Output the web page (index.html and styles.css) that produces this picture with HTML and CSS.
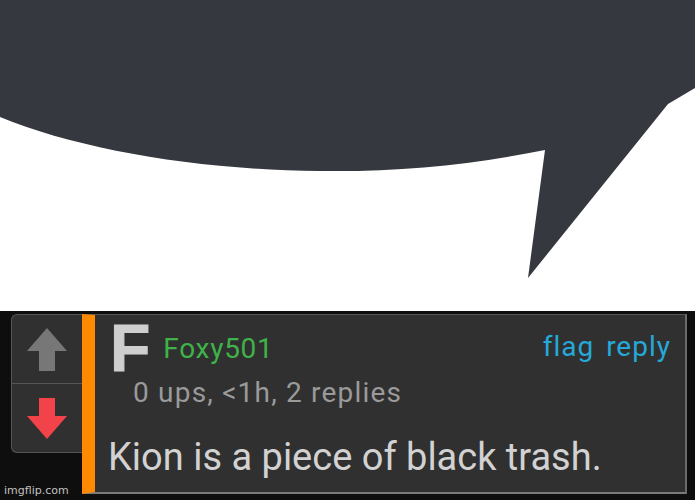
FILE: index.html
```html
<!DOCTYPE html>
<html lang="en">
<head>
  <meta charset="UTF-8" />
  <meta name="viewport" content="width=device-width, initial-scale=1.0" />
  <title>Comment</title>
  <link rel="stylesheet" href="styles.css">
</head>
<body>
  <div class="bubble">
    <svg width="695" height="311" viewBox="0 0 695 311">
      <path d="M0,0 H695 V88 L668,104 L528,278 L545,150 C470,165 400,172 320,171 C200,170 80,150 0,117 Z" fill="#363840" />
    </svg>
  </div>

  <section class="thread">
    <div class="votes">
      <div class="vote up">
        <svg width="40" height="43" viewBox="0 0 40 43"><polygon points="20,0 40,23 28,23 28,43 12,43 12,23 0,23" fill="#777" /></svg>
      </div>
      <div class="vote down">
        <svg width="40" height="41" viewBox="0 0 40 41"><polygon points="12,0 28,0 28,18 40,18 20,41 0,18 12,18" fill="#f2434b" /></svg>
      </div>
    </div>

    <div class="comment">
      <div class="comment-head">
        <span class="avatar">F</span>
        <span class="user">Foxy501</span>
        <span class="links"><a>flag</a><a>reply</a></span>
      </div>
      <div class="meta">0 ups, &lt;1h, 2 replies</div>
      <div class="text">Kion is a piece of black trash.</div>
    </div>

    <span class="watermark">imgflip.com</span>
  </section>
</body>
</html>
```

FILE: styles.css
```css
body {
  margin: 0;
  background: #fff;
  font-family: Roboto, 'Liberation Sans', sans-serif;
  width: 695px;
  height: 500px;
  overflow: hidden;
}
.bubble svg {
  display: block;
}
.thread {
  position: relative;
  height: 186px;
  background: #0e0e0e;
  padding: 3px 0 0 11px;
  display: flex;
  align-items: flex-start;
}
.votes {
  width: 70px;
  background: #303030;
  border: 1px solid #555;
  border-right: none;
  border-radius: 6px 0 0 6px;
}
.vote {
  height: 68px;
  display: flex;
  justify-content: center;
  align-items: center;
}
.vote svg {
  display: block;
}
.vote.up {
  border-bottom: 1px solid #555;
}
.comment {
  width: 590px;
  height: 177px;
  background: #303030;
  border-left: 13px solid #ff8a00;
  border-top: 1px solid #555;
  border-right: 2px solid #6a6a6a;
  border-bottom: 2px solid #7a7a7a;
}
.comment-head {
  display: flex;
  align-items: flex-start;
  padding: 0 14px 0 15px;
}
.avatar {
  font-family: 'Liberation Sans', sans-serif;
  font-size: 66px;
  line-height: 66px;
  font-weight: bold;
  color: #cfcfcf;
  -webkit-text-stroke: 1px #cfcfcf;
}
.user {
  font-size: 28px;
  line-height: 28px;
  letter-spacing: 0.7px;
  color: #3fb24a;
  margin: 20px 0 0 13px;
}
.links {
  margin: 18px 0 0 auto;
  font-size: 28px;
  line-height: 28px;
  letter-spacing: 1px;
  color: #25a9d9;
}
.links a {
  margin-left: 12px;
}
.meta {
  font-size: 28px;
  line-height: 28px;
  letter-spacing: 1.2px;
  color: #9a9a9a;
  margin-top: -2px;
  padding-left: 38px;
}
.text {
  font-size: 38px;
  line-height: 38px;
  color: #d2d2d2;
  margin-top: 31px;
  padding-left: 13px;
}
.watermark {
  position: absolute;
  left: 4px;
  bottom: 3px;
  font-family: 'DejaVu Sans', sans-serif;
  font-size: 11px;
  color: rgba(255, 255, 255, 0.75);
}
```
